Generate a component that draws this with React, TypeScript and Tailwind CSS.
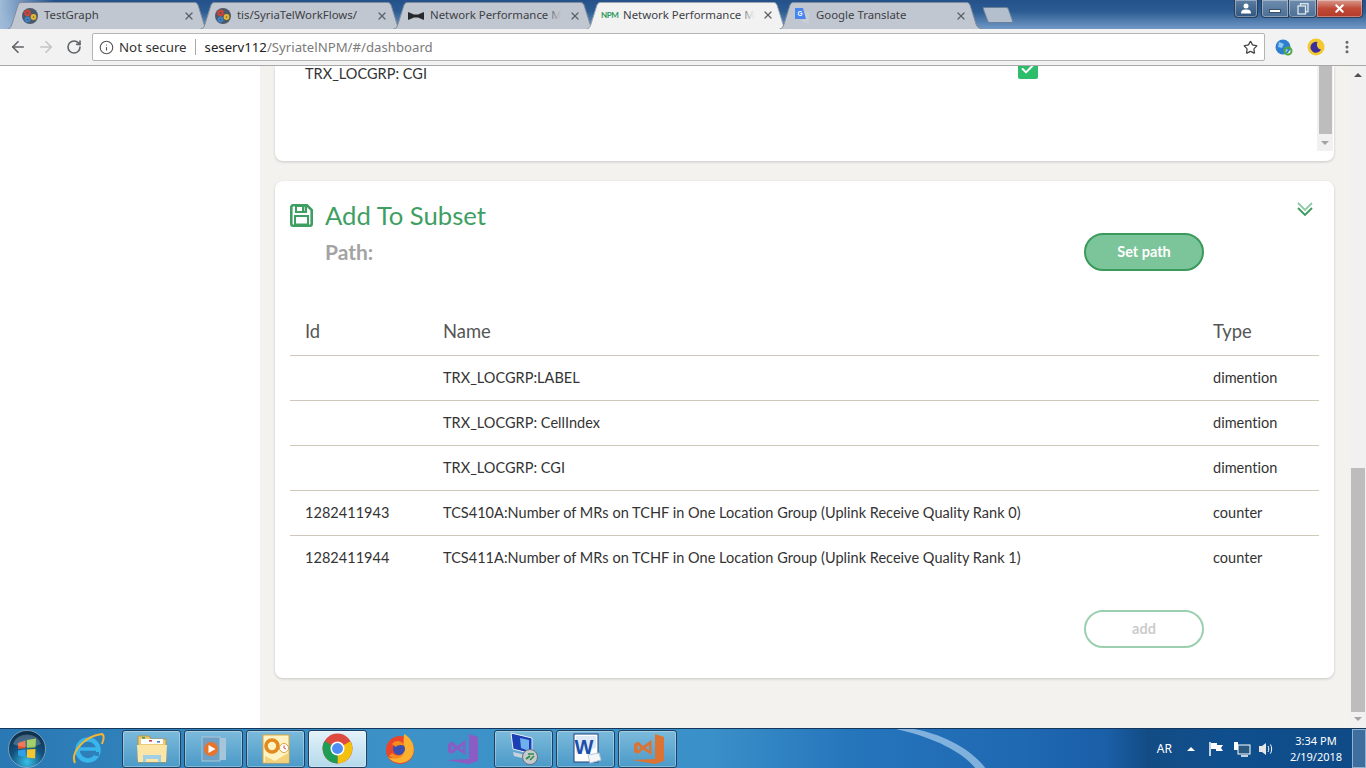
import React from "react";
import { ArrowLeft, ArrowRight, RotateCw, Info, Star, X, MoreVertical, Check } from "lucide-react";

const ui = { fontFamily: '"Noto Sans", "Open Sans", sans-serif' };
const muli = { fontFamily: 'Lato, "Noto Sans", sans-serif' };

function Gears() {
  return (
    <svg width="16" height="16" viewBox="0 0 16 16" className="shrink-0">
      <circle cx="8" cy="8" r="8" fill="#4a5868" />
      <circle cx="5.5" cy="5" r="2.2" fill="none" stroke="#c9433a" strokeWidth="2.4" />
      <circle cx="11.5" cy="9" r="1.8" fill="none" stroke="#e6b52e" strokeWidth="2.2" />
      <circle cx="5.5" cy="11.5" r="1.9" fill="none" stroke="#3b7fc4" strokeWidth="2.2" />
    </svg>
  );
}
function Bow() {
  return (
    <svg width="16" height="16" viewBox="0 0 16 16" className="shrink-0">
      <path d="M0 4 L6 6.5 H10 L16 4 V12 L10 9.5 H6 L0 12 Z" fill="#26282c" />
    </svg>
  );
}
function Npm() {
  return (
    <span className="w-[16px] shrink-0 text-[8px] font-bold leading-none tracking-tighter text-[#2a9a55]" style={muli}>
      NPM
    </span>
  );
}
function Translate() {
  return (
    <svg width="16" height="16" viewBox="0 0 16 16" className="shrink-0">
      <path d="M7 4 H15 V15 H9 Z" fill="#c9ced6" />
      <path d="M1 0 H9 L12 11 H1 Z" fill="#4a84ee" />
      <text x="3.5" y="8" fontSize="6.5" fill="#fff" fontFamily="Liberation Sans" fontWeight="700">G</text>
    </svg>
  );
}

function Tab({ title, icon, active, fade }: { title: string; icon: React.ReactNode; active?: boolean; fade?: boolean }) {
  return (
    <div className="relative -mr-[12px] flex h-[27px] w-[205px] shrink-0 items-center pl-[15px] pr-[17px]">
      <svg className="absolute inset-0" width="205" height="27" viewBox="0 0 205 27">
        <path
          d="M0.5 27 C3 27 4 25 5 22 L11 3 C12 1 13 0.5 15 0.5 H187 C189 0.5 190 1 191 3 L197 22 C198 25 200 27 204.5 27"
          fill={active ? "#f2f2f2" : "#c1c7d0"}
          stroke={active ? "#9aa3ad" : "#7f8b9b"}
        />
      </svg>
      <div className="relative flex w-full items-center">
        {icon}
        <span className="-mt-[2px] ml-[6px] whitespace-nowrap text-[11.4px] text-[#3d4046]" style={ui}>
          {title}
        </span>
        {fade && (
          <span
            className={`absolute left-[138px] h-[16px] w-[15px] bg-gradient-to-r from-transparent ${
              active ? "to-[#f2f2f2]" : "to-[#c1c7d0]"
            }`}
          />
        )}
        <X size={12} strokeWidth={2.6} className="ml-auto text-[#5d6166]" />
      </div>
    </div>
  );
}

function WinButton({ children, className }: { children: React.ReactNode; className: string }) {
  return (
    <div className={`flex h-[18px] items-center justify-center rounded-b-[4px] border border-t-0 border-[#2c3e57] shadow-[inset_0_0_0_1px_rgba(255,255,255,0.35)] ${className}`}>
      {children}
    </div>
  );
}

function ChromeBar() {
  return (
    <header className="shrink-0">
      <div className="flex h-[29px] items-start justify-between bg-[linear-gradient(90deg,#9fbbd8_0%,rgba(159,187,216,0)_4%),linear-gradient(180deg,#25518a_0%,#2c5c93_40%,#7199c6_100%)]">
        <div className="flex items-end pl-[7px] pt-[2px]">
          <Tab title="TestGraph" icon={<Gears />} />
          <Tab title="tis/SyriaTelWorkFlows/" icon={<Gears />} />
          <Tab title="Network Performance M" icon={<Bow />} fade />
          <Tab title="Network Performance M" icon={<Npm />} active fade />
          <Tab title="Google Translate" icon={<Translate />} />
          <div className="mb-[6px] ml-[13px] h-[16px] w-[26px] skew-x-[20deg] rounded-[2px] border border-[#6a8099] bg-[#b3bfcc]" />
        </div>
        <div className="flex gap-[3px] pr-[3px]">
          <WinButton className="w-[24px] bg-gradient-to-b from-[#5c7da0] to-[#2f5680]">
            <svg width="12" height="11" viewBox="0 0 12 11">
              <circle cx="6" cy="3" r="2.5" fill="#fff" />
              <path d="M1 10.5 C1 7 3 6.5 6 6.5 C9 6.5 11 7 11 10.5 Z" fill="#fff" />
            </svg>
          </WinButton>
          <div className="flex">
            <WinButton className="w-[28px] rounded-br-none bg-gradient-to-b from-[#6f8dad] to-[#4a6e96]">
              <div className="mt-[5px] h-[4px] w-[12px] border border-[#3d4f66] bg-white" />
            </WinButton>
            <WinButton className="w-[28px] rounded-none border-l-0 bg-gradient-to-b from-[#6f8dad] to-[#4a6e96]">
              <svg width="12" height="12" viewBox="0 0 12 12">
                <rect x="3.5" y="0.7" width="7.5" height="8" fill="none" stroke="#dfe7ef" strokeWidth="1.3" />
                <rect x="1" y="3" width="7.5" height="8" fill="#587a9e" stroke="#dfe7ef" strokeWidth="1.3" />
              </svg>
            </WinButton>
            <WinButton className="w-[46px] rounded-bl-none border-l-0 bg-gradient-to-b from-[#d5998e] via-[#c24a38] to-[#b13a2b]">
              <X size={13} strokeWidth={3.8} className="text-white" />
            </WinButton>
          </div>
        </div>
      </div>
      <div className="flex h-[37px] items-center border-b border-[#a8a8a8] bg-[#f2f2f2]">
        <div className="flex w-[92px] items-center gap-[10px] pl-[9px] text-[#5f6368]">
          <ArrowLeft size={18} strokeWidth={2.2} />
          <ArrowRight size={18} strokeWidth={2.2} className="text-[#c4c4c4]" />
          <RotateCw size={16} strokeWidth={2.4} className="ml-[1px]" />
        </div>
        <div className="flex h-[28px] w-[1173px] items-center rounded-[2px] border border-[#b4b4b4] bg-white" style={ui}>
          <Info size={15} strokeWidth={1.8} className="ml-[6px] text-[#555]" />
          <span className="ml-[5px] pt-[2px] text-[13.3px] text-[#333]">Not secure</span>
          <span className="ml-[8px] h-[16px] w-px bg-[#a9a9a9]" />
          <span className="ml-[9px] pt-[2px] text-[13.2px] text-[#222]">seserv112</span>
          <span className="pt-[2px] text-[13.2px] text-[#7b7b7b]">/SyriatelNPM/#/dashboard</span>
          <Star size={15} strokeWidth={2} className="ml-auto mr-[6px] text-[#444]" />
        </div>
        <svg width="18" height="18" viewBox="0 0 18 18" className="ml-[10px]">
          <circle cx="8" cy="9" r="7.5" fill="#2f7fd0" />
          <path d="M4 4 L9 6 L7 10 L3 9 Z M10 9 L13 12 L10 16 Z" fill="#8cc8f0" />
          <circle cx="13" cy="13" r="3.5" fill="none" stroke="#4fa83a" strokeWidth="2" />
        </svg>
        <svg width="18" height="18" viewBox="0 0 18 18" className="ml-[14px]">
          <circle cx="9" cy="9" r="8.5" fill="#f3c92f" />
          <path d="M10.5 4 A5.5 5.5 0 1 0 14 11.5 A5 5 0 0 1 10.5 4 Z" fill="#3c2c9c" />
        </svg>
        <MoreVertical size={16} strokeWidth={2.6} className="ml-[14px] text-[#666]" />
      </div>
    </header>
  );
}

const rows = [
  ["", "TRX_LOCGRP:LABEL", "dimention"],
  ["", "TRX_LOCGRP: CellIndex", "dimention"],
  ["", "TRX_LOCGRP: CGI", "dimention"],
  ["1282411943", "TCS410A:Number of MRs on TCHF in One Location Group (Uplink Receive Quality Rank 0)", "counter"],
  ["1282411944", "TCS411A:Number of MRs on TCHF in One Location Group (Uplink Receive Quality Rank 1)", "counter"],
];

function Page() {
  return (
    <div className="flex min-h-0 flex-1" style={muli}>
      <aside className="w-[260px] shrink-0 bg-white" />
      <main className="flex min-w-0 flex-1 flex-col gap-[20px] overflow-hidden bg-[#f3f2ef] pl-[15px] pr-[16px]">
        <section className="flex h-[95px] shrink-0 justify-between rounded-b-[8px] bg-white shadow-[0_1px_3px_rgba(0,0,0,0.18)]">
          <div className="flex flex-1 items-start pl-[30px] pr-[279px]">
            <span className="-mt-px text-[14.5px] leading-[18px] tracking-[0.03px] text-[#333]">TRX_LOCGRP: CGI</span>
            <span className="-mt-[7px] ml-auto flex h-[20px] w-[20px] items-center justify-center rounded-[2px] bg-[#2ebd6b]">
              <Check size={16} strokeWidth={3} className="text-white" />
            </span>
          </div>
          <div className="mb-[10px] mr-[1px] flex w-[16px] flex-col bg-[#f1f1f1]">
            <div className="mx-auto h-[68px] w-[13px] bg-[#bdbdbd]" />
            <div className="flex flex-1 items-center justify-center">
              <div className="h-0 w-0 border-x-[4px] border-t-[4px] border-x-transparent border-t-[#a3a3a3]" />
            </div>
          </div>
        </section>
        <section className="h-[497px] shrink-0 rounded-[8px] bg-white px-[15px] pt-[19px] shadow-[0_1px_3px_rgba(0,0,0,0.18)]">
          <div className="relative flex items-center pt-[1px]">
            <svg width="23" height="23" viewBox="0 0 23 23" className="-mt-[1px]">
              <path d="M3 1.3 H17 L21.7 6 V20 a1.7 1.7 0 0 1 -1.7 1.7 H3 a1.7 1.7 0 0 1 -1.7 -1.7 V3 a1.7 1.7 0 0 1 1.7 -1.7 Z" fill="none" stroke="#3f9f63" strokeWidth="2.6" />
              <path d="M6 2 H16 V8 H6 Z" fill="none" stroke="#3f9f63" strokeWidth="2" />
              <rect x="12" y="3" width="2.4" height="4" fill="#3f9f63" />
              <rect x="5" y="12" width="13" height="8.5" fill="none" stroke="#3f9f63" strokeWidth="2" />
            </svg>
            <h2 className="-mt-[1px] ml-[12px] text-[25.7px] font-normal leading-[30px] text-[#3f9f63]">Add To Subset</h2>
            <svg width="16" height="16" viewBox="0 0 16 16" className="absolute right-[6px] top-[1px]">
              <path d="M1 2 L8 9 L15 2" fill="none" stroke="#8ccba6" strokeWidth="1.8" />
              <path d="M1 7 L8 14 L15 7" fill="none" stroke="#3a9a5c" strokeWidth="1.8" />
            </svg>
          </div>
          <div className="flex items-center justify-between pl-[35px] pr-[115px] pt-[3px]">
            <span className="text-[21px] font-bold text-[#a3a3a3]">Path:</span>
            <button className="h-[38px] w-[120px] rounded-[19px] border-2 border-[#3a9a5c] bg-[#7cc49a] text-[14.5px] font-bold text-white">Set path</button>
          </div>
          <div className="grid h-[85px] grid-cols-[138px_770px_1fr] items-center border-b border-[#cfc8bb] pl-[15px] pt-[36px] text-[18.4px] leading-[20px] text-[#555]">
            <div>Id</div>
            <div>Name</div>
            <div>Type</div>
          </div>
          {rows.map((r, i) => (
            <div key={i} className={`grid h-[45px] grid-cols-[138px_770px_1fr] items-center border-b pl-[15px] text-[14.5px] tracking-[0.03px] text-[#333] ${i < 4 ? "border-[#cfc8bb]" : "border-transparent"}`}>
              <div>{r[0]}</div>
              <div>{r[1]}</div>
              <div>{r[2]}</div>
            </div>
          ))}
          <div className="flex justify-end pr-[115px] pt-[29px]">
            <button className="h-[38px] w-[120px] rounded-[19px] border-2 border-[#9bcfb0] bg-white text-[14.5px] font-bold text-[#cccccc]">add</button>
          </div>
        </section>
      </main>
      <div className="relative w-[16px] shrink-0 bg-[#f1f1f1]">
        <div className="absolute left-[4px] top-[7px] h-0 w-0 border-x-[4px] border-b-[4px] border-x-transparent border-b-[#505050]" />
        <div className="absolute left-[1px] top-[402px] h-[244px] w-[14px] bg-[#bdbdbd]" />
        <div className="absolute bottom-[7px] left-[4px] h-0 w-0 border-x-[4px] border-t-[4px] border-x-transparent border-t-[#a3a3a3]" />
      </div>
    </div>
  );
}

function TaskSlot({ children, framed, active }: { children: React.ReactNode; framed?: boolean; active?: boolean }) {
  return (
    <div
      className={`flex h-[38px] w-[59px] items-center justify-center rounded-[3px] ${
        framed ? "border border-[#21405f] shadow-[inset_0_0_0_1px_rgba(255,255,255,0.3)]" : ""
      } ${active ? "bg-gradient-to-b from-[#e3f2f9] to-[#b3d9ec]" : framed ? "bg-gradient-to-b from-[#7bbadb] to-[#4a9ac8]" : ""}`}
    >
      {children}
    </div>
  );
}

function VsMark({ color }: { color: string }) {
  return (
    <svg width="32" height="30" viewBox="0 0 32 30">
      <path d="M23 0 L32 3 V27 L23 30 L0 26 L23 25 Z" fill={color} />
      <path d="M2 10 L6 7.5 L11 12 L19.5 6 V21 L11 15.5 L6 20 L2 18 Z M5.5 11 V16.5 L8.5 13.7 Z M13.5 13.7 L17 16.5 V11 Z" fill={color} fillRule="evenodd" />
    </svg>
  );
}

function Taskbar() {
  return (
    <footer
      className="relative flex h-[40px] shrink-0 items-center overflow-hidden border-t border-[#16375c] bg-[linear-gradient(90deg,#2a78b4_0%,#3d93c8_30%,#3a90c8_52%,#2676bc_62%,#1f68b2_75%,#1a5fa8_81%,#134c84_84%,#0f4f8e_90%,#0e4a86_100%)] text-white"
      style={ui}
    >
      <svg width="100" height="40" viewBox="0 0 100 40" className="absolute left-[892px] top-0">
        <path d="M4 0 C40 8 70 22 84 40 H94 C80 20 50 5 22 0 Z" fill="#a9cfee" opacity="0.7" />
      </svg>
      <div className="relative flex w-[122px] items-center">
        <svg width="38" height="38" viewBox="0 0 38 38" className="ml-[8px]">
          <defs>
            <radialGradient id="orb" cx="50%" cy="85%" r="80%">
              <stop offset="0%" stopColor="#36c0e8" />
              <stop offset="55%" stopColor="#14527e" />
              <stop offset="100%" stopColor="#0f2f4a" />
            </radialGradient>
          </defs>
          <circle cx="19" cy="19" r="18.5" fill="url(#orb)" stroke="#a9c3d6" strokeOpacity="0.6" />
          <path d="M10 13 L17.5 10.5 V18 L10 19 Z" fill="#e8542a" />
          <path d="M19 10 L28 8.5 L27.5 17.5 L19 18 Z" fill="#8cc43e" />
          <path d="M10 20.5 L17.5 19.5 V27 L10 25.5 Z" fill="#2f9fe8" />
          <path d="M19 19.5 L27.5 19 L27 28.5 L19 27.5 Z" fill="#f7c62c" />
          <path d="M5 14 A14.5 13 0 0 1 33 14 C25 18 13 18 5 14 Z" fill="#fff" opacity="0.22" />
        </svg>
        <svg width="34" height="34" viewBox="0 0 34 34" className="ml-[25px]">
          <ellipse cx="17" cy="18" rx="10.5" ry="10.5" fill="none" stroke="#39b5ec" strokeWidth="4.5" />
          <path d="M8 17 H27" stroke="#39b5ec" strokeWidth="3.5" />
          <path d="M28 22 H24" stroke="#2f80b8" strokeWidth="4" />
          <path d="M4 31 C-1 20 14 4 31 2 C33 3 33 7 31 12" fill="none" stroke="#f2b632" strokeWidth="2" />
        </svg>
      </div>
      <div className="relative flex gap-[3px]">
        <TaskSlot framed>
          <svg width="32" height="28" viewBox="0 0 32 28">
            <path d="M2 1 H13 L15 4 H30 V27 H2 Z" fill="#eccb78" stroke="#b5944a" />
            <rect x="5" y="4" width="22" height="5" fill="#fff" />
            <rect x="6" y="2" width="3" height="1.6" fill="#3aa845" />
            <rect x="13" y="5" width="3" height="1.6" fill="#c9433a" />
            <rect x="21" y="6" width="3" height="1.6" fill="#3b7fc4" />
            <path d="M1 10 H31 L30 27 H2 Z" fill="#fbe6a8" />
            <path d="M7 20 H25 V27 H22 V24 H10 V27 H7 Z" fill="#9fd0e6" />
          </svg>
        </TaskSlot>
        <TaskSlot framed>
          <svg width="28" height="26" viewBox="0 0 28 26">
            <rect x="16" y="2" width="10" height="22" fill="#a5c5da" />
            <rect x="2" y="1" width="18" height="24" fill="#6f9fc2" stroke="#a9c7da" />
            <circle cx="11" cy="13" r="7" fill="#e8742c" />
            <path d="M8.5 9 L15.5 13 L8.5 17 Z" fill="#fff" />
          </svg>
        </TaskSlot>
        <TaskSlot framed>
          <svg width="30" height="30" viewBox="0 0 30 30">
            <rect x="2" y="1" width="26" height="28" fill="#fff3c4" stroke="#dfa73a" />
            <circle cx="11" cy="12" r="6" fill="none" stroke="#e28a1e" strokeWidth="3.6" />
            <circle cx="23" cy="14" r="4.5" fill="#fff" stroke="#d9a23c" />
            <path d="M23 11.5 V14 L25 15" fill="none" stroke="#c44" />
            <path d="M4 22 L14 27 L27 19 V28 H4 Z" fill="#f3d27a" />
          </svg>
        </TaskSlot>
        <TaskSlot framed active>
          <svg width="31" height="31" viewBox="0 0 30 30">
            <circle cx="15" cy="15" r="14.5" fill="#dd4b3e" />
            <path d="M15 15 L27.5 8 A14.5 14.5 0 0 1 15 29.5 Z" fill="#f4c20d" />
            <path d="M15 15 L15 29.5 A14.5 14.5 0 0 1 2.5 7.8 Z" fill="#1f9d55" />
            <circle cx="15" cy="15" r="6.8" fill="#fff" />
            <circle cx="15" cy="15" r="5.3" fill="#4d8ef5" />
          </svg>
        </TaskSlot>
        <TaskSlot>
          <svg width="30" height="32" viewBox="0 0 30 32">
            <circle cx="15" cy="17" r="14" fill="#e8452c" />
            <path d="M19 1 C29 6 32 19 25 26 C19 32 8 31 3 24 C12 28 21 21 19 13 C18 9 19 5 19 1 Z" fill="#fbb12f" />
            <circle cx="14" cy="16" r="6" fill="#3a4fb0" />
            <path d="M7 11 C11 6 17 8 20 13 C16 11 12 12 11 14 Z" fill="#f58a1f" />
            <path d="M4 23 C9 27 16 26 19 21 C15 23 10 23 7 20 Z" fill="#f58a1f" />
          </svg>
        </TaskSlot>
        <TaskSlot>
          <VsMark color="#8a5cc4" />
        </TaskSlot>
        <TaskSlot framed>
          <svg width="32" height="34" viewBox="0 0 32 34">
            <path d="M3 1 L24 6 V22 L5 17 Z" fill="#1a3fb4" stroke="#e8eef4" />
            <path d="M12 6 L21 8 V19 L13 16 Z" fill="#6fb0ec" />
            <path d="M5 20 L22 24 L22 28 L6 24 Z" fill="#c9d2dc" />
            <circle cx="22" cy="25" r="7.5" fill="#c3cad0" stroke="#6a7178" />
            <path d="M18 27 L22 24 M20 22 H26 M26 24 L22 28" stroke="#2e8a43" strokeWidth="1.6" fill="none" />
          </svg>
        </TaskSlot>
        <TaskSlot framed>
          <svg width="32" height="32" viewBox="0 0 32 32">
            <rect x="4" y="1" width="24" height="28" fill="#fff" stroke="#1c3f80" />
            <path d="M6 3 H26 V15 L6 20 Z" fill="#dfe9f6" />
            <text x="4.5" y="21" fontSize="20" fontWeight="700" fill="#1c4fa8" fontFamily="Liberation Sans">W</text>
            <path d="M18 22 L29 20 L31 27 L20 30 Z" fill="#f4f6f8" stroke="#b9c7d4" />
          </svg>
        </TaskSlot>
        <TaskSlot framed>
          <VsMark color="#dd7333" />
        </TaskSlot>
      </div>
      <div className="relative ml-auto flex items-center">
        <span className="text-[12px]">AR</span>
        <div className="ml-[15px] h-0 w-0 border-x-[4px] border-b-[4px] border-x-transparent border-b-white" />
        <svg width="16" height="16" viewBox="0 0 16 16" className="ml-[13px]">
          <path d="M2 1 V15" stroke="#fff" strokeWidth="1.5" />
          <path d="M3 2 H9 V4 H15 L13 7 L15 10 H8 V8 H3 Z" fill="#fff" />
        </svg>
        <svg width="18" height="16" viewBox="0 0 18 16" className="ml-[9px]">
          <rect x="5" y="4" width="12" height="9" fill="#2b5a80" stroke="#fff" />
          <path d="M8 15 H15" stroke="#fff" strokeWidth="1.5" />
          <rect x="1" y="1" width="4" height="8" fill="#fff" />
        </svg>
        <svg width="16" height="16" viewBox="0 0 16 16" className="ml-[7px]">
          <path d="M1 5 H4 L8 2 V14 L4 11 H1 Z" fill="#e6e6e6" />
          <path d="M10 5 C11 7 11 9 10 11 M12.5 3.5 C14 6 14 10 12.5 12.5" fill="none" stroke="#fff" />
        </svg>
        <div className="ml-[6px] w-[72px] text-center text-[11px] leading-[16px]">
          <div>3:34 PM</div>
          <div>2/19/2018</div>
        </div>
        <div className="h-[39px] w-[14px] border border-[#8fb3cf] bg-white/20" />
      </div>
    </footer>
  );
}

export default function App() {
  return (
    <div className="flex h-screen w-screen flex-col overflow-hidden">
      <ChromeBar />
      <Page />
      <Taskbar />
    </div>
  );
}
